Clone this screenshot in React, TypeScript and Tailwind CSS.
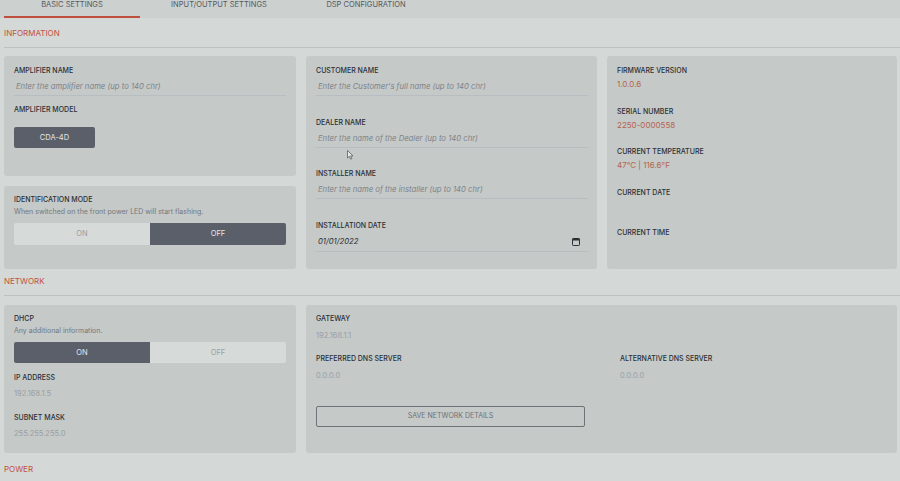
import React from "react";

const label = "text-[7px] leading-[9px] font-medium text-[#2b2f36] uppercase";
const placeholder = "text-[7.7px] italic text-[#7f8388]";

function Field({ title, hint, className = "" }: { title: string; hint: string; className?: string }) {
  return (
    <div className={className}>
      <div className={label}>{title}</div>
      <div className="mt-[4px] flex h-[17px] items-center border-b border-[#b8bdc1] pl-[2px]">
        <span className={placeholder}>{hint}</span>
      </div>
    </div>
  );
}

function Info({ title, value }: { title: string; value?: string }) {
  return (
    <div className="h-[40.5px]">
      <div className={label}>{title}</div>
      <div className="mt-[3px] h-[12px] text-[8px] leading-[12px] text-[#b5634f]">{value}</div>
    </div>
  );
}

function Toggle({ on }: { on: boolean }) {
  const active = "bg-[#5b5f69] text-[#e6e8ea]";
  const idle = "bg-[#d6dad9] text-[#9a9ea2]";
  return (
    <div className="grid h-full grid-cols-2 overflow-hidden rounded-[2px] text-[7.5px]">
      <div className={`flex items-center justify-center ${on ? active : idle}`}>ON</div>
      <div className={`flex items-center justify-center ${on ? idle : active}`}>OFF</div>
    </div>
  );
}

function Section({ title }: { title: string }) {
  return (
    <div className="flex h-[30px] items-center border-b border-[#bec2c2] pt-[1px] text-[8px] text-[#c2513e]">
      {title}
    </div>
  );
}

export default function App() {
  return (
    <div className="relative h-[481px] w-[900px] overflow-hidden bg-[#d4d8d7] font-['Inter','Liberation_Sans',sans-serif]">
      {/* tabs */}
      <div className="flex h-[18px] gap-[11px] bg-[#ccd0cf] px-[4px] text-[7.5px] leading-[9px] text-[#55595f]">
        <div className="flex w-[136px] justify-center border-b-2 border-[#c0503d]">BASIC SETTINGS</div>
        <div className="flex w-[136px] justify-center">INPUT/OUTPUT SETTINGS</div>
        <div className="flex w-[136px] justify-center">DSP CONFIGURATION</div>
      </div>

      <div className="pl-[4px]">
        <Section title="INFORMATION" />

        <div className="mt-[8px] grid h-[210px] grid-cols-[292px_291px_1fr] gap-[10px] pr-[3px]">
          {/* column 1 */}
          <div className="flex flex-col gap-[10px]">
            <div className="h-[120px] rounded-[3px] bg-[#c5c9c8] px-[10px] pt-[10px]">
              <Field title="AMPLIFIER NAME" hint="Enter the amplifier name (up to 140 chr)" />
              <div className={`${label} mt-[9px]`}>AMPLIFIER MODEL</div>
              <div className="mt-[13px] flex h-[21px] w-[81px] items-center justify-center rounded-[2px] bg-[#5b5f69] text-[7.5px] text-[#e3e5e8]">
                CDA-4D
              </div>
            </div>
            <div className="flex-1 rounded-[3px] bg-[#c5c9c8] px-[10px] pt-[9px]">
              <div className={label}>IDENTIFICATION MODE</div>
              <div className="mt-[3px] text-[7px] leading-[9px] text-[#74787d]">
                When switched on the front power LED will start flashing.
              </div>
              <div className="mt-[7px] h-[22px]">
                <Toggle on={false} />
              </div>
            </div>
          </div>

          {/* column 2 */}
          <div className="flex flex-col gap-[21.5px] rounded-[3px] bg-[#c5c9c8] pl-[10px] pr-[9px] pt-[10px]">
            <Field title="CUSTOMER NAME" hint="Enter the Customer's full name (up to 140 chr)" />
            <Field title="DEALER NAME" hint="Enter the name of the Dealer (up to 140 chr)" />
            <Field title="INSTALLER NAME" hint="Enter the name of the installer (up to 140 chr)" />
            <div>
              <div className={label}>INSTALLATION DATE</div>
              <div className="mt-[4px] flex h-[18px] items-center justify-between border-b border-[#b8bdc1] pl-[2px] pr-[8px]">
                <span className="text-[7.7px] italic text-[#2b2f36]">01/01/2022</span>
                <svg width="8" height="8" viewBox="0 0 8 8">
                  <rect x="0.5" y="0.5" width="7" height="7" rx="0.8" fill="none" stroke="#2b2f36" strokeWidth="1" />
                  <rect x="0.5" y="0.5" width="7" height="2" fill="#2b2f36" />
                </svg>
              </div>
            </div>
          </div>

          {/* column 3 */}
          <div className="rounded-[3px] bg-[#c5c9c8] px-[10px] pt-[10px]">
            <Info title="FIRMWARE VERSION" value="1.0.0.6" />
            <Info title="SERIAL NUMBER" value="2250-0000558" />
            <Info title="CURRENT TEMPERATURE" value="47°C | 116.6°F" />
            <Info title="CURRENT DATE" />
            <Info title="CURRENT TIME" />
          </div>
        </div>

        <Section title="NETWORK" />

        <div className="mt-[9px] grid h-[148px] grid-cols-[292px_1fr] gap-[10px] pr-[3px]">
          <div className="rounded-[3px] bg-[#c5c9c8] px-[10px] pt-[9px]">
            <div className={label}>DHCP</div>
            <div className="mt-[3px] text-[7px] leading-[9px] text-[#74787d]">Any additional information.</div>
            <div className="mt-[7px] h-[21px]">
              <Toggle on={true} />
            </div>
            <div className={`${label} mt-[10px]`}>IP ADDRESS</div>
            <div className="mt-[7px] text-[7.5px] leading-[10px] text-[#9a9ea2]">192.168.1.5</div>
            <div className={`${label} mt-[14px]`}>SUBNET MASK</div>
            <div className="mt-[7px] text-[7.5px] leading-[10px] text-[#9a9ea2]">255.255.255.0</div>
          </div>

          <div className="rounded-[3px] bg-[#c5c9c8] px-[10px] pt-[9px]">
            <div className={label}>GATEWAY</div>
            <div className="mt-[8px] text-[7.5px] leading-[10px] text-[#9a9ea2]">192.168.1.1</div>
            <div className="mt-[13px] grid grid-cols-[304px_1fr]">
              <div>
                <div className={label}>PREFERRED DNS SERVER</div>
                <div className="mt-[8px] text-[7.5px] leading-[10px] text-[#9a9ea2]">0.0.0.0</div>
              </div>
              <div>
                <div className={label}>ALTERNATIVE DNS SERVER</div>
                <div className="mt-[8px] text-[7.5px] leading-[10px] text-[#9a9ea2]">0.0.0.0</div>
              </div>
            </div>
            <div className="mt-[25px] flex h-[21px] w-[269px] items-center justify-center rounded-[2px] border border-[#6e7277] text-[7px] text-[#6e7277]">
              SAVE NETWORK DETAILS
            </div>
          </div>
        </div>

        <div className="flex h-[30px] items-center pt-[1px] text-[8px] text-[#c2513e]">POWER</div>
      </div>

      {/* mouse pointer */}
      <svg className="absolute left-[347px] top-[150px]" width="7" height="10" viewBox="0 0 7 10">
        <path d="M0.5 0.5 L0.5 8 L2.3 6.3 L3.6 9.2 L4.8 8.7 L3.6 5.9 L6 5.9 Z" fill="#e8eaea" stroke="#4a4e55" strokeWidth="0.7" />
      </svg>
    </div>
  );
}
